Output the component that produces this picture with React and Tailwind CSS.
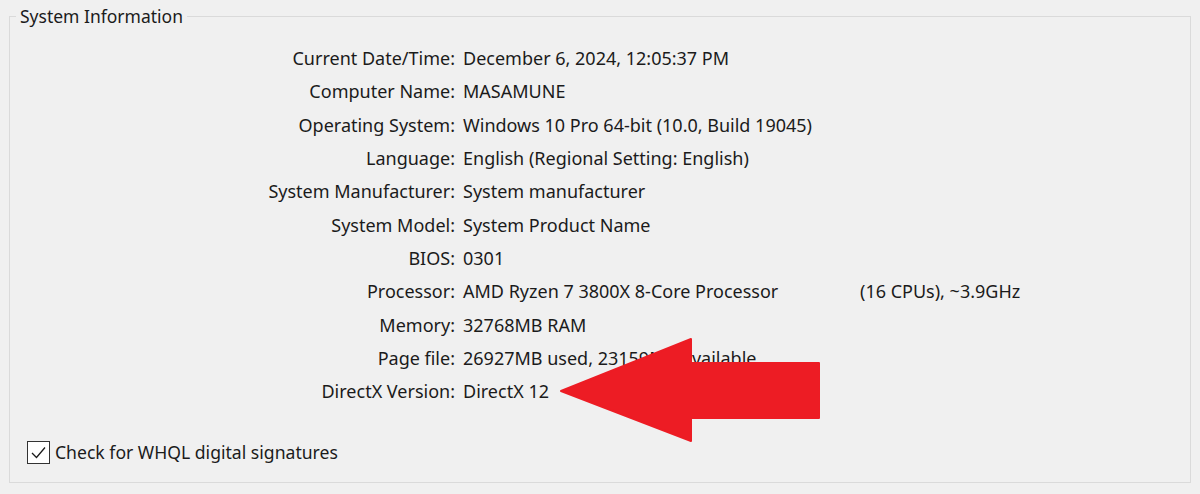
import React from "react";

const rows = [
  ["Current Date/Time:", "December 6, 2024, 12:05:37 PM"],
  ["Computer Name:", "MASAMUNE"],
  ["Operating System:", "Windows 10 Pro 64-bit (10.0, Build 19045)"],
  ["Language:", "English (Regional Setting: English)"],
  ["System Manufacturer:", "System manufacturer"],
  ["System Model:", "System Product Name"],
  ["BIOS:", "0301"],
  ["Processor:", "PROC"],
  ["Memory:", "32768MB RAM"],
  ["Page file:", "26927MB used, 23159MB available"],
  ["DirectX Version:", "DirectX 12"],
];

export default function App() {
  return (
    <div
      className="w-[1200px] h-[494px] bg-[#f0f0f0] pt-[16px] text-[#1b1b1b] overflow-hidden"
      style={{ fontFamily: '"Noto Sans", "Open Sans", sans-serif' }}
    >
      <div className="relative mx-[9px] h-[467px] border border-[#dadada]">
        <div className="absolute left-[6px] top-[-13px] px-[4px] bg-[#f0f0f0] text-[17.5px] leading-[24px]">
          System Information
        </div>
        <div className="pt-[25px] flex flex-col">
          {rows.map(([l, v]) => (
            <div key={l} className="flex items-center h-[33.3px] text-[18px]">
              <div className="w-[445px] text-right shrink-0">{l}</div>
              <div className="pl-[8px] whitespace-nowrap">
                {v === "PROC" ? (
                  <span className="flex">
                    <span className="w-[397px]">AMD Ryzen 7 3800X 8-Core Processor</span>
                    <span>(16 CPUs), ~3.9GHz</span>
                  </span>
                ) : (
                  v
                )}
              </div>
            </div>
          ))}
        </div>
        <div className="mt-[31px] ml-[17px] flex items-center gap-[5px] text-[17.6px]">
          <div className="w-[23px] h-[23px] border border-[#333] bg-white flex items-center justify-center">
            <svg width="17" height="17" viewBox="0 0 17 17">
              <path d="M2 9 L6.5 13.5 L15 3.5" fill="none" stroke="#1b1b1b" strokeWidth="1.3" />
            </svg>
          </div>
          <span>Check for WHQL digital signatures</span>
        </div>
        <svg
          className="absolute left-0 top-0 pointer-events-none"
          width="1182"
          height="467"
          viewBox="9 16 1182 467"
        >
          <polygon
            points="560,390 690,338 690,362 818,362 818,417 690,417 690,440"
            fill="#ed1c24"
            strokeLinejoin="round"
            stroke="#ed1c24"
            strokeWidth="2"
          />
        </svg>
      </div>
    </div>
  );
}
